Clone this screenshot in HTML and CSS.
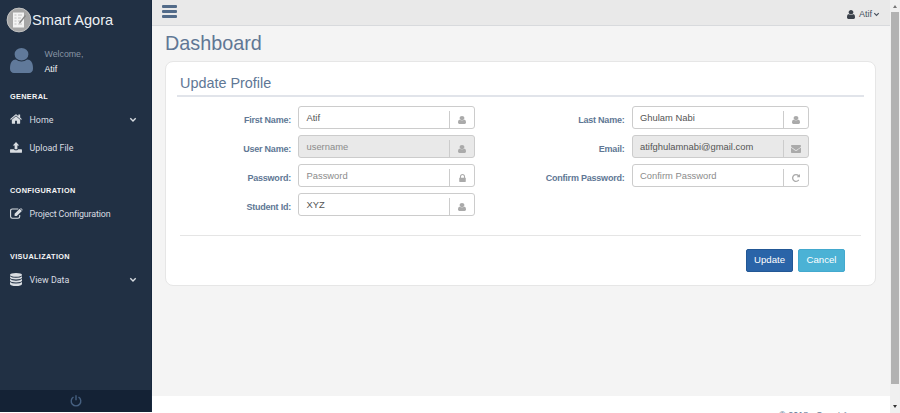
FILE: index.html
```html
<!DOCTYPE html>
<html lang="en">
<head>
<meta charset="utf-8">
<title>Smart Agora</title>
<link rel="stylesheet" href="styles.css">
</head>
<body>
<svg class="defs" aria-hidden="true">
  <symbol id="user" viewBox="0 -1408 1280 1536" preserveAspectRatio="none"><path transform="scale(1,-1)" d="M1280 137q0 -109 -62.5 -187t-150.5 -78h-854q-88 0 -150.5 78t-62.5 187q0 85 8.5 160.5t31.5 152t58.5 131t94 89t134.5 34.5q131 -128 313 -128t313 128q76 0 134.5 -34.5t94 -89t58.5 -131t31.5 -152t8.5 -160.5zM1024 1024q0 -159 -112.5 -271.5t-271.5 -112.5t-271.5 112.5t-112.5 271.5t112.5 271.5t271.5 112.5t271.5 -112.5t112.5 -271.5z"/></symbol>
  <symbol id="home" viewBox="0 -1283 1664 1283"><path transform="scale(1,-1)" d="M1408 544v-480q0 -26 -19 -45t-45 -19h-384v384h-256v-384h-384q-26 0 -45 19t-19 45v480q0 1 0.5 3t0.5 3l575 474l575 -474q1 -2 1 -6zM1631 613l-62 -74q-8 -9 -21 -11h-3q-13 0 -21 7l-692 577l-692 -577q-12 -8 -24 -7q-13 2 -21 11l-62 74q-8 10 -7 23.5t11 21.5l719 599q32 26 76 26t76 -26l244 -204v195q0 14 9 23t23 9h192q14 0 23 -9t9 -23v-408l219 -182q10 -8 11 -21.5t-7 -23.5z"/></symbol>
  <symbol id="lock" viewBox="0 -1408 1152 1408"><path transform="scale(1,-1)" d="M320 768h512v192q0 106 -75 181t-181 75t-181 -75t-75 -181v-192zM1152 672v-576q0 -40 -28 -68t-68 -28h-960q-40 0 -68 28t-28 68v576q0 40 28 68t68 28h32v192q0 184 132 316t316 132t316 -132t132 -316v-192h32q40 0 68 -28t28 -68z"/></symbol>
  <symbol id="mail" viewBox="0 -1280 1792 1408"><path transform="scale(1,-1)" d="M1792 826v-794q0 -66 -47 -113t-113 -47h-1472q-66 0 -113 47t-47 113v794q44 -49 101 -87q362 -246 497 -345q57 -42 92.5 -65.5t94.5 -48t110 -24.5h1h1q51 0 110 24.5t94.5 48t92.5 65.5q170 123 498 345q57 39 100 87zM1792 1120q0 -79 -49 -151t-122 -123q-376 -261 -468 -325q-10 -7 -42.5 -30.5t-54 -38t-52 -32.5t-57.5 -27t-50 -9h-1h-1q-23 0 -50 9t-57.5 27t-52 32.5t-54 38t-42.5 30.5q-91 64 -262 182.5t-205 142.5q-62 42 -117 115.5t-55 136.5q0 78 41.5 130t118.5 52h1472q65 0 112.5 -47t47.5 -113z"/></symbol>
  <symbol id="repeat" viewBox="0 -1408 1536 1536"><path transform="scale(1,-1)" d="M1536 1280v-448q0 -26 -19 -45t-45 -19h-448q-42 0 -59 40q-17 39 14 69l138 138q-148 137 -349 137q-104 0 -198.5 -40.5t-163.5 -109.5t-109.5 -163.5t-40.5 -198.5t40.5 -198.5t109.5 -163.5t163.5 -109.5t198.5 -40.5q119 0 225 52t179 147q7 10 23 12q15 0 25 -9l137 -138q9 -8 9.5 -20.5t-7.5 -22.5q-109 -132 -264 -204.5t-327 -72.5q-156 0 -298 61t-245 164t-164 245t-61 298t61 298t164 245t245 164t298 61q147 0 284.5 -55.5t244.5 -156.5l130 129q29 31 70 14q39 -17 39 -59z"/></symbol>
  <symbol id="upload" viewBox="0 0 13 12"><path d="M6.5 0 10 3.8H8V8H5V3.8H3zM.6 8H4.2q.2 1.1 1.3 1.1h2Q8.600 9.100 8.800 8H12.400q.6 0 .6.6v2.600q0 .6-.6.6H.6q-.6 0-.6-.6V8.600Q0 8 .6 8z"/></symbol>
  <symbol id="edit" viewBox="0 0 13 11"><path d="M8.300 1H2.300Q.6 1 .6 2.700V8.500Q.6 10.200 2.300 10.200H8Q9.700 10.200 9.700 8.500V7" fill="none" stroke="currentColor" stroke-width="1.100"/><path d="M4.600 5.800 9.700.7 11.900 2.900 6.800 8H4.600zM10.200.3q.5-.5 1 0l1.200 1.200q.5.5 0 1z"/></symbol>
  <symbol id="database" viewBox="0 0 12 13"><ellipse cx="6" cy="1.900" rx="6" ry="1.900"/><path d="M0 3.200q2 1.600 6 1.600t6-1.600v1.600q-.6 1.700-6 1.700T0 4.800zM0 6.100q2 1.600 6 1.600t6-1.600v1.600q-.6 1.700-6 1.700T0 7.700zM0 9q2 1.600 6 1.600T12 9v2q-.6 2-6 2T0 11z"/></symbol>
  <symbol id="chevron" viewBox="0 0 8 6"><path d="M1.300 1.300 4 4 6.700 1.300" fill="none" stroke="currentColor" stroke-width="1.400"/></symbol>
  <symbol id="power" viewBox="0 0 12 12"><path d="M3.500 2A4.800 4.800 0 1 0 8.500 2M6 .3V5.300" fill="none" stroke="currentColor" stroke-width="1.400"/></symbol>
</svg>
<div class="app">
  <aside class="sidebar">
    <div class="brand">
      <svg class="logo" viewBox="0 0 26 26"><circle cx="13" cy="13" r="11.900" fill="#a6a6a6" stroke="#c3c3c3" stroke-width="1"/><path d="M7 5.500h11v15H7z" fill="#f3f3f3"/><path d="M8.500 8h2M12 8h4M8.500 11h2M12 11h3M8.500 14h2M12 14h3M8.500 17h2M12 17h4" stroke="#bbb" stroke-width=".9"/><path d="m19 8 1 1-5.500 7-1.500.6.4-1.600z" fill="#888"/></svg>
      <span>Smart Agora</span>
    </div>
    <div class="profile">
      <svg class="avatar"><use href="#user"/></svg>
      <div class="who"><span class="welcome">Welcome,</span><span class="name">Atif</span></div>
    </div>
    <nav>
      <h3>GENERAL</h3>
      <a class="item"><svg class="i-home"><use href="#home"/></svg><span>Home</span><svg class="chev"><use href="#chevron"/></svg></a>
      <a class="item"><svg class="i-upload"><use href="#upload"/></svg><span>Upload File</span></a>
      <h3 class="spaced">CONFIGURATION</h3>
      <a class="item"><svg class="i-edit"><use href="#edit"/></svg><span class="tight">Project Configuration</span></a>
      <h3 class="spaced">VISUALIZATION</h3>
      <a class="item"><svg class="i-db"><use href="#database"/></svg><span>View Data</span><svg class="chev"><use href="#chevron"/></svg></a>
    </nav>
    <div class="logout"><svg><use href="#power"/></svg></div>
  </aside>
  <div class="page">
    <header class="topbar">
      <div class="menu"><i></i><i></i><i></i></div>
      <div class="account"><svg class="acc-user"><use href="#user"/></svg><span>Atif</span><svg class="acc-chev"><use href="#chevron"/></svg></div>
    </header>
    <main>
      <h1>Dashboard</h1>
      <section class="card">
        <h2>Update Profile</h2>
        <form class="fields">
          <div class="column">
            <div class="row"><label>First Name:</label><div class="field"><span>Atif</span><b><svg class="f-user"><use href="#user"/></svg></b></div></div>
            <div class="row"><label>User Name:</label><div class="field disabled hint"><span>username</span><b><svg class="f-user"><use href="#user"/></svg></b></div></div>
            <div class="row"><label>Password:</label><div class="field hint"><span>Password</span><b><svg class="f-lock"><use href="#lock"/></svg></b></div></div>
            <div class="row"><label>Student Id:</label><div class="field"><span>XYZ</span><b><svg class="f-user"><use href="#user"/></svg></b></div></div>
          </div>
          <div class="column">
            <div class="row"><label>Last Name:</label><div class="field"><span>Ghulam Nabi</span><b><svg class="f-user"><use href="#user"/></svg></b></div></div>
            <div class="row"><label>Email:</label><div class="field disabled"><span>atifghulamnabi@gmail.com</span><b><svg class="f-mail"><use href="#mail"/></svg></b></div></div>
            <div class="row"><label>Confirm Password:</label><div class="field hint"><span>Confirm Password</span><b><svg class="f-repeat"><use href="#repeat"/></svg></b></div></div>
          </div>
        </form>
        <div class="actions"><button class="update">Update</button><button class="cancel">Cancel</button></div>
      </section>
    </main>
    <footer>© 2018 - Smart Agora</footer>
  </div>
  <div class="scrollbar"><i class="up"></i><div class="thumb"></div><i class="down"></i></div>
</div>
</body>
</html>
```
FILE: styles.css
```css
* { box-sizing: border-box; }
body { margin: 0; background: #fff; font: 10px/14px "Liberation Sans", sans-serif; color: #5a7391; overflow: hidden; }
svg { display: block; fill: currentColor; flex: none; }
.defs { display: none; }
h1, h2, h3 { margin: 0; font-weight: 400; }
.app { display: flex; width: 900px; height: 413px; overflow: hidden; }

.sidebar { width: 152px; height: 412px; flex: none; display: flex; flex-direction: column; background: #213044; border-right: 1px solid #17283e; color: #d9dde2; }
.brand { display: flex; align-items: center; height: 40px; padding-left: 6px; font-size: 14.600px; color: #edf1f4; }
.brand span { line-height: 20px; }
.logo { width: 26px; height: 26px; }
.profile { display: flex; height: 47px; padding: 8px 0 0 10px; }
.avatar { width: 23px; height: 25px; color: #60799a; }
.who { display: flex; flex-direction: column; margin: -1px 0 0 11.500px; font-size: 8.800px; line-height: 15px; }
.welcome { color: #8895a5; }
.name { color: #f4f6f8; }
h3 { height: 18px; padding: 3px 0 0 10px; font: 700 7.300px/14px "Liberation Sans", sans-serif; letter-spacing: .35px; color: #f6f6f6; }
h3.spaced { height: 19px; padding-top: 4px; margin-top: 19px; }
.item { display: flex; align-items: center; height: 28px; padding: 0 14px 0 10px; font: 8.900px/14px Roboto, sans-serif; }
.item span { flex: 1; padding-top: 1px; }
.item .tight { letter-spacing: -.13px; }
.i-home { width: 12px; height: 10px; margin-right: 7.500px; }
.i-upload { width: 12px; height: 11px; margin-right: 7.500px; }
.i-edit { width: 13px; height: 11px; margin-right: 6.500px; }
.i-db { width: 12px; height: 13px; margin-right: 7.500px; }
.chev { width: 8px; height: 6px; margin-top: 2px; }
.logout { margin-top: auto; height: 22px; display: flex; align-items: center; justify-content: center; background: #142235; color: #466080; }
.logout svg { width: 12px; height: 12px; }

.page { flex: 1; display: flex; flex-direction: column; min-width: 0; }
.topbar { height: 26px; flex: none; display: flex; justify-content: space-between; background: #e9e9e9; border-bottom: 1px solid #d8dadd; }
.menu { display: flex; flex-direction: column; gap: 2px; padding: 5px 0 0 10px; }
.menu i { width: 15px; height: 3px; border-radius: 1px; background: #526b89; }
.account { display: flex; align-items: center; padding: 3px 10px 0 0; color: #48525f; font-size: 9px; }
.acc-user { width: 8px; height: 9px; margin-right: 4px; color: #3a414a; }
.acc-chev { width: 7px; height: 5px; margin: 1px 0 0 1px; }
main { flex: 1; padding: 5px 14px 0 13px; background: #f4f4f4; }
h1 { font-size: 19.800px; line-height: 24px; color: #607795; }
.card { height: 225px; margin-top: 6px; padding: 10px 11px 0; background: #fff; border: 1px solid #e6e6e6; border-radius: 8px; }
h2 { height: 25px; padding-left: 3px; font-size: 14.400px; line-height: 23px; color: #607795; border-bottom: 2px solid #e1e4ea; }
.fields { display: flex; height: 139px; margin: 0 3px; padding-top: 9px; border-bottom: 1px solid #e5e5e5; }
.column { display: flex; flex-direction: column; gap: 6px; width: 295px; }
.column + .column { width: 333.500px; }
.row { display: flex; justify-content: flex-end; height: 23px; }
label { padding: 7px 7px 0 0; font: 700 9px/14px "Liberation Sans", sans-serif; letter-spacing: -.22px; color: #607795; }
.field { display: flex; justify-content: space-between; width: 177px; height: 23px; padding-left: 7.500px; border: 1px solid #ccc; border-radius: 3px; color: #555; font-size: 9.400px; }
.field span { padding-top: 4px; }
.field.hint { color: #8b8b8b; }
.field.disabled { background: #e9e9e9; }
.field b { display: flex; align-items: center; justify-content: center; width: 25px; height: 17px; margin: 4px 0 0; border-left: 1px solid #ccc; color: #aaa; }
.f-user { width: 8px; height: 8px; }
.f-lock { width: 7px; height: 8px; }
.f-mail { width: 10px; height: 8px; }
.f-repeat { width: 8px; height: 8px; }
.actions { display: flex; justify-content: flex-end; gap: 5px; padding: 13px 19px 0 0; }
button { height: 23px; padding: 0 0 1px; border-radius: 2px; color: #fff; font: 9.600px/14px "Liberation Sans", sans-serif; }
.update { width: 47px; background: #2a64a8; border: 1px solid #225795; }
.cancel { width: 47px; background: #4bb2d5; border: 1px solid #43a9ce; }
footer { height: 17px; flex: none; padding: 12px 0 0 627px; background: #fff; font-size: 9px; line-height: 14px; white-space: nowrap; overflow: hidden; }

.scrollbar { width: 10px; flex: none; display: flex; flex-direction: column; align-items: center; background: #f0f0f0; }
.up { margin: 5px 0 4px; border: 2px solid transparent; border-top: 0; border-bottom: 3px solid #777; }
.thumb { width: 8px; height: 372px; background: #b2b2b2; }
.down { margin-top: 21px; border: 2px solid transparent; border-bottom: 0; border-top: 3px solid #333; }
```
